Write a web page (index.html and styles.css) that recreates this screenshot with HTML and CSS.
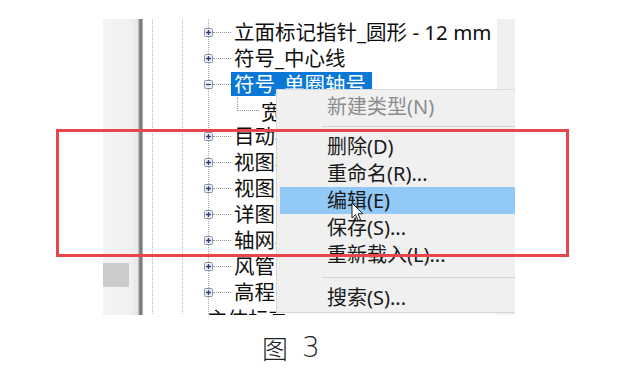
FILE: index.html
```html
<!DOCTYPE html>
<html lang="zh-CN">
<head>
<meta charset="utf-8">
<title>图 3</title>
<link rel="stylesheet" href="styles.css">
</head>
<body>
<div class="page">
  <div class="shot">
    <div class="gutter"><div class="gutter-box"></div></div>
    <div class="divider"></div>
    <div class="tree">
      <div class="row"><svg class="exp" viewBox="0 0 9 9"><rect x="0.5" y="0.5" width="8" height="8" rx="1" class="exp-box"/><path d="M2 4.5h5M4.5 2v5" class="exp-sign"/></svg><span class="conn"></span><span class="label">立面标记指针_圆形 - 12 mm</span></div>
      <div class="row"><svg class="exp" viewBox="0 0 9 9"><rect x="0.5" y="0.5" width="8" height="8" rx="1" class="exp-box"/><path d="M2 4.5h5M4.5 2v5" class="exp-sign"/></svg><span class="conn"></span><span class="label">符号_中心线</span></div>
      <div class="row"><svg class="exp" viewBox="0 0 9 9"><rect x="0.5" y="0.5" width="8" height="8" rx="1" class="exp-box"/><path d="M2 4.5h5" class="exp-sign"/></svg><span class="conn"></span><span class="label selected">符号_单圈轴号</span></div>
      <div class="row child"><span class="elbow"></span><span class="label">宽</span></div>
      <div class="row"><svg class="exp" viewBox="0 0 9 9"><rect x="0.5" y="0.5" width="8" height="8" rx="1" class="exp-box"/><path d="M2 4.5h5M4.5 2v5" class="exp-sign"/></svg><span class="conn"></span><span class="label">目动标记</span></div>
      <div class="row"><svg class="exp" viewBox="0 0 9 9"><rect x="0.5" y="0.5" width="8" height="8" rx="1" class="exp-box"/><path d="M2 4.5h5M4.5 2v5" class="exp-sign"/></svg><span class="conn"></span><span class="label">视图标题</span></div>
      <div class="row"><svg class="exp" viewBox="0 0 9 9"><rect x="0.5" y="0.5" width="8" height="8" rx="1" class="exp-box"/><path d="M2 4.5h5M4.5 2v5" class="exp-sign"/></svg><span class="conn"></span><span class="label">视图参照</span></div>
      <div class="row"><svg class="exp" viewBox="0 0 9 9"><rect x="0.5" y="0.5" width="8" height="8" rx="1" class="exp-box"/><path d="M2 4.5h5M4.5 2v5" class="exp-sign"/></svg><span class="conn"></span><span class="label">详图索引</span></div>
      <div class="row"><svg class="exp" viewBox="0 0 9 9"><rect x="0.5" y="0.5" width="8" height="8" rx="1" class="exp-box"/><path d="M2 4.5h5M4.5 2v5" class="exp-sign"/></svg><span class="conn"></span><span class="label">轴网标头</span></div>
      <div class="row"><svg class="exp" viewBox="0 0 9 9"><rect x="0.5" y="0.5" width="8" height="8" rx="1" class="exp-box"/><path d="M2 4.5h5M4.5 2v5" class="exp-sign"/></svg><span class="conn"></span><span class="label">风管尺寸</span></div>
      <div class="row"><svg class="exp" viewBox="0 0 9 9"><rect x="0.5" y="0.5" width="8" height="8" rx="1" class="exp-box"/><path d="M2 4.5h5M4.5 2v5" class="exp-sign"/></svg><span class="conn"></span><span class="label">高程点</span></div>
      <div class="row parent"><span class="label">主体标高</span></div>
    </div>
    <div class="scroll"></div>
    <div class="menu">
      <div class="item disabled">新建类型(N)</div>
      <div class="sep"></div>
      <div class="item">删除(D)</div>
      <div class="item">重命名(R)...</div>
      <div class="item hover">编辑(E)</div>
      <div class="item">保存(S)...</div>
      <div class="item">重新载入(L)...</div>
      <div class="sep sep2"></div>
      <div class="item">搜索(S)...</div>
    </div>
    <svg class="cursor" viewBox="0 0 13 20"><path d="M1 1 L1 16 L4.6 12.6 L7.2 18.6 L9.6 17.6 L7 11.8 L11.8 11.8 Z" fill="#fff" stroke="#222" stroke-width="1" stroke-linejoin="round"/></svg>
  </div>
  <div class="annot"></div>
  <div class="caption"><span>图</span><span class="num">3</span></div>
</div>
</body>
</html>
```

FILE: styles.css
```css
* { box-sizing: border-box; }
html, body { margin: 0; padding: 0; background: #fff; }
body { font-family: "Noto Sans", "Noto Sans CJK SC", sans-serif; }

.page {
  position: relative;
  width: 617px;
  height: 382px;
  padding: 19px 0 0 103px;
  overflow: hidden;
}

.shot {
  position: relative;
  display: flex;
  width: 412px;
  height: 296px;
  overflow: hidden;
}

.gutter {
  width: 35px;
  background: linear-gradient(to right, #f4f4f4 0, #f0f0f0 80%, #e6e6e6 100%);
  padding-top: 244px;
}
.gutter-box {
  width: 26px;
  height: 24px;
  background: #cbcbcb;
}

.divider {
  width: 5px;
  background: linear-gradient(to right, #d6d6d6, #707070 45%, #7a7a7a 65%, #bdbdbd);
}

.tree {
  flex: 1;
  overflow: hidden;
  background-color: #fff;
  background-image:
    repeating-linear-gradient(to bottom, #b8b8b8 0 1px, transparent 1px 2px),
    repeating-linear-gradient(to bottom, #b8b8b8 0 1px, transparent 1px 2px),
    repeating-linear-gradient(to bottom, #a8a8a8 0 1px, transparent 1px 2px);
  background-size: 1px 100%, 1px 100%, 1px 100%;
  background-position: 9px 0, 39px 0, 65px 0;
  background-repeat: no-repeat;
  color: #0e0e0e;
  font-size: 20.5px;
}

.row {
  height: 26px;
  display: flex;
  align-items: center;
  padding-left: 61px;
  white-space: nowrap;
}
.row.child { padding-left: 94px; align-items: flex-start; }
.row.parent { padding-left: 64px; align-items: flex-start; }
.row.parent .label { line-height: 22px; margin-top: 3px; }

.exp { width: 9px; height: 9px; flex: none; background: #fff; }
.exp-box { fill: #eceff4; stroke: #8a93a6; stroke-width: 1; }
.exp-sign { stroke: #2e4279; stroke-width: 1.3; fill: none; }

.conn {
  width: 18px;
  height: 0;
  border-top: 1px dotted #9a9a9a;
  margin-right: 3px;
  flex: none;
}

.label { line-height: 24px; }
.selected {
  background: #0a78d6;
  color: #fff;
  margin-left: -3px;
  padding: 0 6px 0 3px;
}

.elbow {
  width: 22px;
  height: 14px;
  border-left: 1px dotted #9a9a9a;
  border-bottom: 1px dotted #9a9a9a;
  margin-right: 2px;
  flex: none;
}
.row.child .label { line-height: 26px; margin-top: 2px; }

.scroll {
  width: 18px;
  background: #f0f0f0;
}

.menu {
  position: absolute;
  left: 173px;
  top: 70px;
  width: 239px;
  height: 224px;
  background: #f0f0f0;
  border-left: 1px solid #d9d9d9;
  border-top: 1px solid #dcdcdc;
  border-bottom: 1px solid #d6d6d6;
  padding: 3px 0 0 0;
  font-size: 20px;
  color: #1a1a1a;
}
.item {
  height: 27px;
  line-height: 27px;
  padding-left: 47px;
  margin-left: 3px;
  white-space: nowrap;
}
.item.disabled { color: #8c8c8c; }
.item.hover { background: #92c9f6; }
.sep {
  height: 13px;
  margin-left: 45px;
  background: linear-gradient(#d2d2d2, #d2d2d2) 0 6px / 100% 1px no-repeat;
}
.sep2 { height: 16px; background-position: 0 9px; }

.cursor {
  position: absolute;
  left: 248px;
  top: 183px;
  width: 13px;
  height: 20px;
}

.annot {
  position: absolute;
  left: 56px;
  top: 129px;
  width: 513px;
  height: 128px;
  border: 3.5px solid #e9464b;
}

.caption {
  padding: 19px 0 0 159px;
  font-family: "Noto Sans CJK SC", sans-serif;
  font-weight: 200;
  font-size: 26px;
  line-height: 27px;
  color: #222;
  display: flex;
  gap: 14px;
}
.caption .num { font-family: "DejaVu Sans", "Noto Sans", sans-serif; font-weight: 200; font-size: 28px; }
```
